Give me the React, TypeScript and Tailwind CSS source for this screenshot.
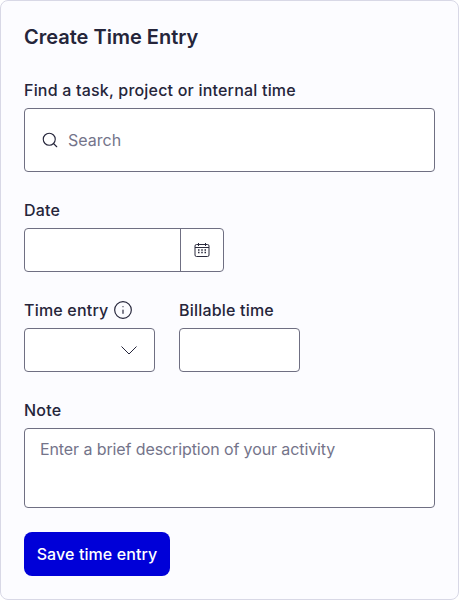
import { Info, Search } from "lucide-react";

function CalendarIcon() {
    return (
        <svg width="16" height="16" viewBox="0 0 16 16" fill="none" stroke="#2a2a3c" strokeWidth="1">
            <rect x="1" y="2.5" width="14" height="12" rx="1.5" />
            <path d="M1 5.5h14M4.500 1v3M11.500 1v3" />
            <path d="M4 8h1.500M7.250 8h1.500M10.500 8h1.500M4 10.500h1.500M7.250 10.500h1.500M10.500 10.500h1.500" strokeWidth="1.300" />
        </svg>
    );
}

function Label({ children }: { children: React.ReactNode }) {
    return <div className="text-[16px] leading-5 font-medium tracking-[0.2px] text-[#25253a]">{children}</div>;
}

export default function App() {
    return (
        <div className="w-[459px] h-[600px] bg-[#fcfcff] border border-[#d8d8e6] rounded-lg px-[23px] pt-[22px] font-['Inter',sans-serif] text-[#25253a]">
            <h1 className="text-[20px] leading-[28px] font-semibold">Create Time Entry</h1>

            <div className="mt-[29px]">
                <Label>Find a task, project or internal time</Label>
                <div className="mt-2 h-16 w-[411px] bg-white border border-[#6f6f82] rounded flex items-center pl-4 gap-[9px]">
                    <Search size={18} strokeWidth={1.500} className="text-[#25253a]" />
                    <span className="text-[16px] text-[#74748a]">Search</span>
                </div>
            </div>

            <div className="mt-[28px]">
                <Label>Date</Label>
                <div className="mt-2 h-11 w-[200px] bg-white border border-[#6f6f82] rounded flex">
                    <div className="flex-1 border-r border-[#6f6f82]"></div>
                    <div className="w-[42px] flex items-center justify-center">
                        <CalendarIcon />
                    </div>
                </div>
            </div>

            <div className="mt-[28px] flex gap-6">
                <div>
                    <div className="flex items-center gap-[5px] h-5">
                        <Label>Time entry</Label>
                        <Info size={20} strokeWidth={1.400} />
                    </div>
                    <div className="mt-2 h-11 w-[131px] bg-white border border-[#6f6f82] rounded flex items-center justify-end pr-[17px]">
                        <svg width="16" height="9" viewBox="0 0 16 9" fill="none" stroke="#25253a" strokeWidth="1">
                            <path d="M0.500 0.500l7.500 7.500 7.500-7.500" />
                        </svg>
                    </div>
                </div>
                <div>
                    <Label>Billable time</Label>
                    <div className="mt-2 h-11 w-[121px] bg-white border border-[#6f6f82] rounded"></div>
                </div>
            </div>

            <div className="mt-[28px]">
                <Label>Note</Label>
                <div className="mt-2 h-20 w-[411px] bg-white border border-[#6f6f82] rounded px-[15px] pt-[10px] text-[16px] leading-5 tracking-[-0.1px] text-[#74748a]">
                    Enter a brief description of your activity
                </div>
            </div>

            <button className="mt-6 h-11 w-[146px] bg-[#0000d8] text-white rounded-lg text-[16px] font-medium tracking-[0.1px]">
                Save time entry
            </button>
        </div>
    );
}
